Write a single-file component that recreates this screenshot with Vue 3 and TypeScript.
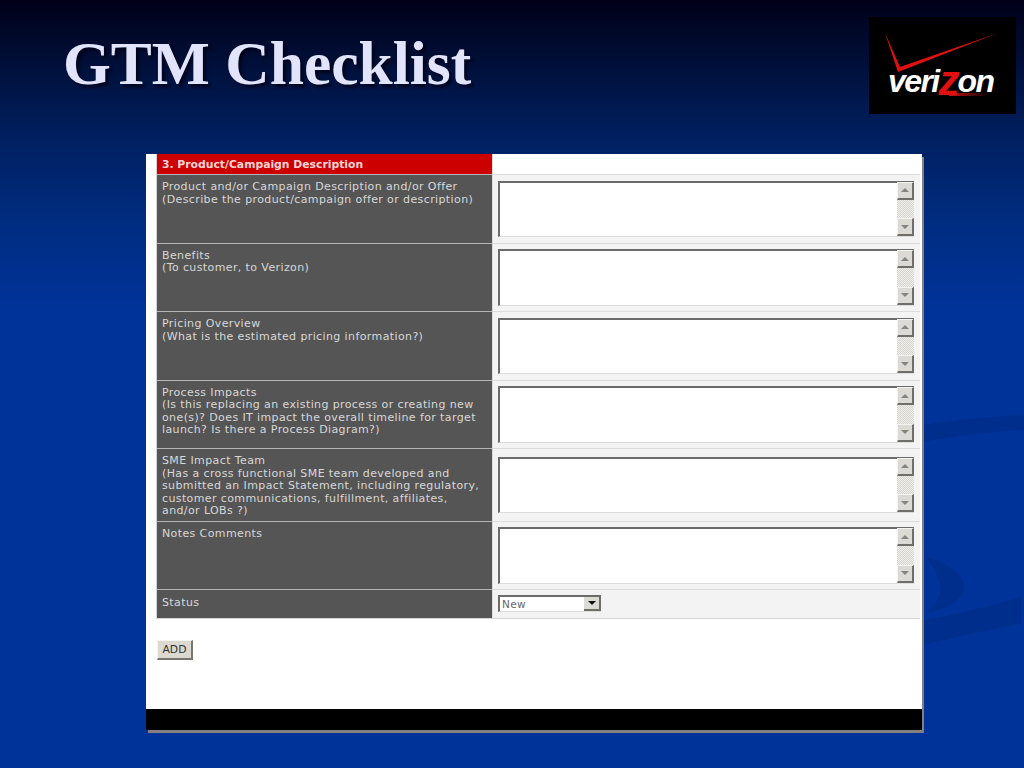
<script setup lang="ts">
interface Row { id: number; lines: string[] }
const rows: Row[] = [
  { id: 1, lines: ['Product and/or Campaign Description and/or Offer', '(Describe the product/campaign offer or description)'] },
  { id: 2, lines: ['Benefits', '(To customer, to Verizon)'] },
  { id: 3, lines: ['Pricing Overview', '(What is the estimated pricing information?)'] },
  { id: 4, lines: ['Process Impacts', '(Is this replacing an existing process or creating new', 'one(s)? Does IT impact the overall timeline for target', 'launch? Is there a Process Diagram?)'] },
  { id: 5, lines: ['SME Impact Team', '(Has a cross functional SME team developed and', 'submitted an Impact Statement, including regulatory,', 'customer communications, fulfillment, affiliates,', 'and/or LOBs ?)'] },
  { id: 6, lines: ['Notes Comments'] },
]
</script>

<template>
  <div class="slide">
    <svg class="swoosh" width="100" height="240" viewBox="0 0 100 240" aria-hidden="true">
      <path d="M0 17 C30 12 65 9 100 7 V22 C65 24 30 28 0 34 Z" />
      <path d="M2 149 C25 155 42 168 40 180 C38 192 25 201 2 205 C12 197 18 187 16 177 C14 166 8 157 2 149 Z" />
      <path d="M0 212 C35 206 70 197 97 189 V215 C65 222 30 229 0 237 Z" />
    </svg>

    <header class="head">
      <h1 class="title">GTM Checklist</h1>
      <div class="logo">
        <svg class="check" width="147" height="60" viewBox="0 0 147 60" aria-hidden="true">
          <path d="M16 16 L29 55 L129 16 L31 50 Z" fill="#e01010" />
        </svg>
        <div class="tail"></div>
        <div class="word">veri<span class="zed">z</span>on</div>
      </div>
    </header>

    <main class="panel">
      <section class="table">
        <div class="section-title">3. Product/Campaign Description</div>
        <div class="section-rest"></div>

        <template v-for="row in rows" :key="row.id">
          <div class="label">
            <div v-for="line in row.lines" :key="line">{{ line }}</div>
          </div>
          <div class="value">
            <div class="field">
              <div class="field-text"></div>
              <div class="scroll">
                <div class="sbtn"><span class="up"></span></div>
                <div class="track"></div>
                <div class="sbtn"><span class="down"></span></div>
              </div>
            </div>
          </div>
        </template>

        <div class="label status-label">Status</div>
        <div class="value status-value">
          <div class="select">
            <span class="select-text">New</span>
            <span class="select-btn"><span class="down dark"></span></span>
          </div>
        </div>
      </section>

      <div class="actions">
        <button class="add" type="button">ADD</button>
      </div>
      <div class="black"></div>
    </main>
  </div>
</template>

<style scoped>
.slide {
  position: relative;
  width: 1024px;
  height: 768px;
  overflow: hidden;
  background: linear-gradient(180deg, #000018 0, #000a2c 40px, #001e5c 130px, #002c80 220px, #003399 310px);
  font-family: "DejaVu Sans", Verdana, sans-serif;
}
.swoosh {
  position: absolute;
  left: 924px;
  top: 408px;
}
.swoosh path {
  fill: #002e8c;
}
.head {
  position: relative;
  display: flex;
  justify-content: space-between;
  align-items: flex-start;
  height: 154px;
  padding: 17px 8px 0 63px;
  box-sizing: border-box;
}
.title {
  margin: 8px 0 0;
  font-family: "Liberation Serif", "Times New Roman", serif;
  font-weight: 700;
  font-size: 61.5px;
  line-height: 76px;
  color: #e2e4fb;
  text-shadow: 3px 3px 3px rgba(0, 0, 20, 0.75);
}
.logo {
  position: relative;
  width: 147px;
  height: 97px;
  background: #000;
}
.check {
  position: absolute;
  left: 0;
  top: 0;
}
.tail {
  position: absolute;
  left: 80px;
  top: 76px;
  width: 40px;
  height: 3px;
  background: linear-gradient(90deg, #d01010, rgba(160, 10, 10, 0));
}
.word {
  position: absolute;
  left: 19px;
  top: 48px;
  font-family: "Liberation Sans", Arial, sans-serif;
  font-weight: 700;
  font-style: italic;
  font-size: 32px;
  line-height: 32px;
  letter-spacing: -1.6px;
  color: #fff;
  white-space: nowrap;
}
.zed {
  color: #e01010;
  font-size: 42px;
  line-height: 0;
  vertical-align: -3px;
  letter-spacing: -2px;
}
.panel {
  position: relative;
  width: 776px;
  height: 576px;
  margin-left: 146px;
  display: flex;
  flex-direction: column;
  background: #fff;
  box-shadow: 2px 3px 0 #84807f;
}
.table {
  margin-left: 11px;
  width: 763px;
  display: grid;
  grid-template-columns: 335px 427px;
  column-gap: 1px;
  row-gap: 1px;
  background: linear-gradient(90deg, #b4b4b4 335px, #dcdcdc 335px);
  border-bottom: 1px solid #d4d4d4;
  box-shadow: -1px 0 0 #d4d4d4;
  font-size: 11px;
  line-height: 12.5px;
  letter-spacing: 0.39px;
}
.section-title {
  height: 20px;
  padding-left: 5px;
  background: #cc0000;
  color: #f8d4d4;
  font-size: 10.8px;
  font-weight: 700;
  letter-spacing: 0;
  line-height: 21px;
}
.section-rest {
  background: #fff;
}
.label {
  background: #555;
  color: #d8d8d8;
  padding: 6px 5px 3px;
  min-height: 67.5px;
  box-sizing: border-box;
}
.value {
  display: flex;
  align-items: center;
  background: #f3f3f3;
  padding: 0 5px;
  box-sizing: border-box;
}
.field {
  display: flex;
  width: 416px;
  height: 56.5px;
  box-sizing: border-box;
  background: #fff;
  border-top: 2px solid #6b6b6b;
  border-left: 2px solid #6b6b6b;
  border-bottom: 1px solid #dcdcdc;
}
.field-text {
  flex: 1;
}
.scroll {
  width: 17px;
  display: flex;
  flex-direction: column;
  margin-top: -1px;
  background: repeating-conic-gradient(#f0efec 0 25%, #d6d4cf 0 50%) 0 0 / 2px 2px;
}
.track {
  flex: 1;
}
.sbtn {
  height: 18px;
  box-sizing: border-box;
  display: flex;
  align-items: center;
  justify-content: center;
  background: #dcdad5;
  border-top: 1px solid #f4f4f2;
  border-left: 1px solid #f4f4f2;
  border-right: 2px solid #6f6e6a;
  border-bottom: 2px solid #6f6e6a;
}
.up,
.down {
  width: 0;
  height: 0;
  border-left: 4px solid transparent;
  border-right: 4px solid transparent;
}
.up {
  border-bottom: 4px solid #85857f;
}
.down {
  border-top: 4px solid #85857f;
}
.down.dark {
  border-top-color: #111;
}
.status-label {
  min-height: 28px;
  height: 28px;
  padding-top: 7px;
}
.status-value {
  align-items: flex-start;
  padding: 5px 5px 0;
}
.select {
  width: 103px;
  height: 17px;
  box-sizing: border-box;
  display: flex;
  justify-content: space-between;
  background: #fff;
  border-top: 2px solid #6b6b6b;
  border-left: 2px solid #6b6b6b;
  border-bottom: 1px solid #dcdcdc;
}
.select-text {
  padding-left: 2px;
  color: #666;
  font-size: 10.5px;
  line-height: 15px;
}
.select-btn {
  width: 17px;
  box-sizing: border-box;
  display: flex;
  align-items: center;
  justify-content: center;
  background: #dcdad5;
  border-right: 2px solid #6f6e6a;
  border-bottom: 2px solid #6f6e6a;
}
.actions {
  flex: 1;
  padding: 21px 0 0 11px;
}
.add {
  display: block;
  width: 36px;
  height: 20px;
  padding: 0;
  box-sizing: border-box;
  background: #dcdad0;
  border: 0;
  border-top: 1px solid #f4f4f0;
  border-left: 1px solid #f4f4f0;
  border-right: 2px solid #77766f;
  border-bottom: 2px solid #77766f;
  color: #333;
  font-family: "DejaVu Sans", Verdana, sans-serif;
  font-size: 10.8px;
  line-height: 16px;
}
.black {
  height: 21px;
  background: #000;
}
</style>

<style>
html, body {
  margin: 0;
  background: #003399;
}
</style>
